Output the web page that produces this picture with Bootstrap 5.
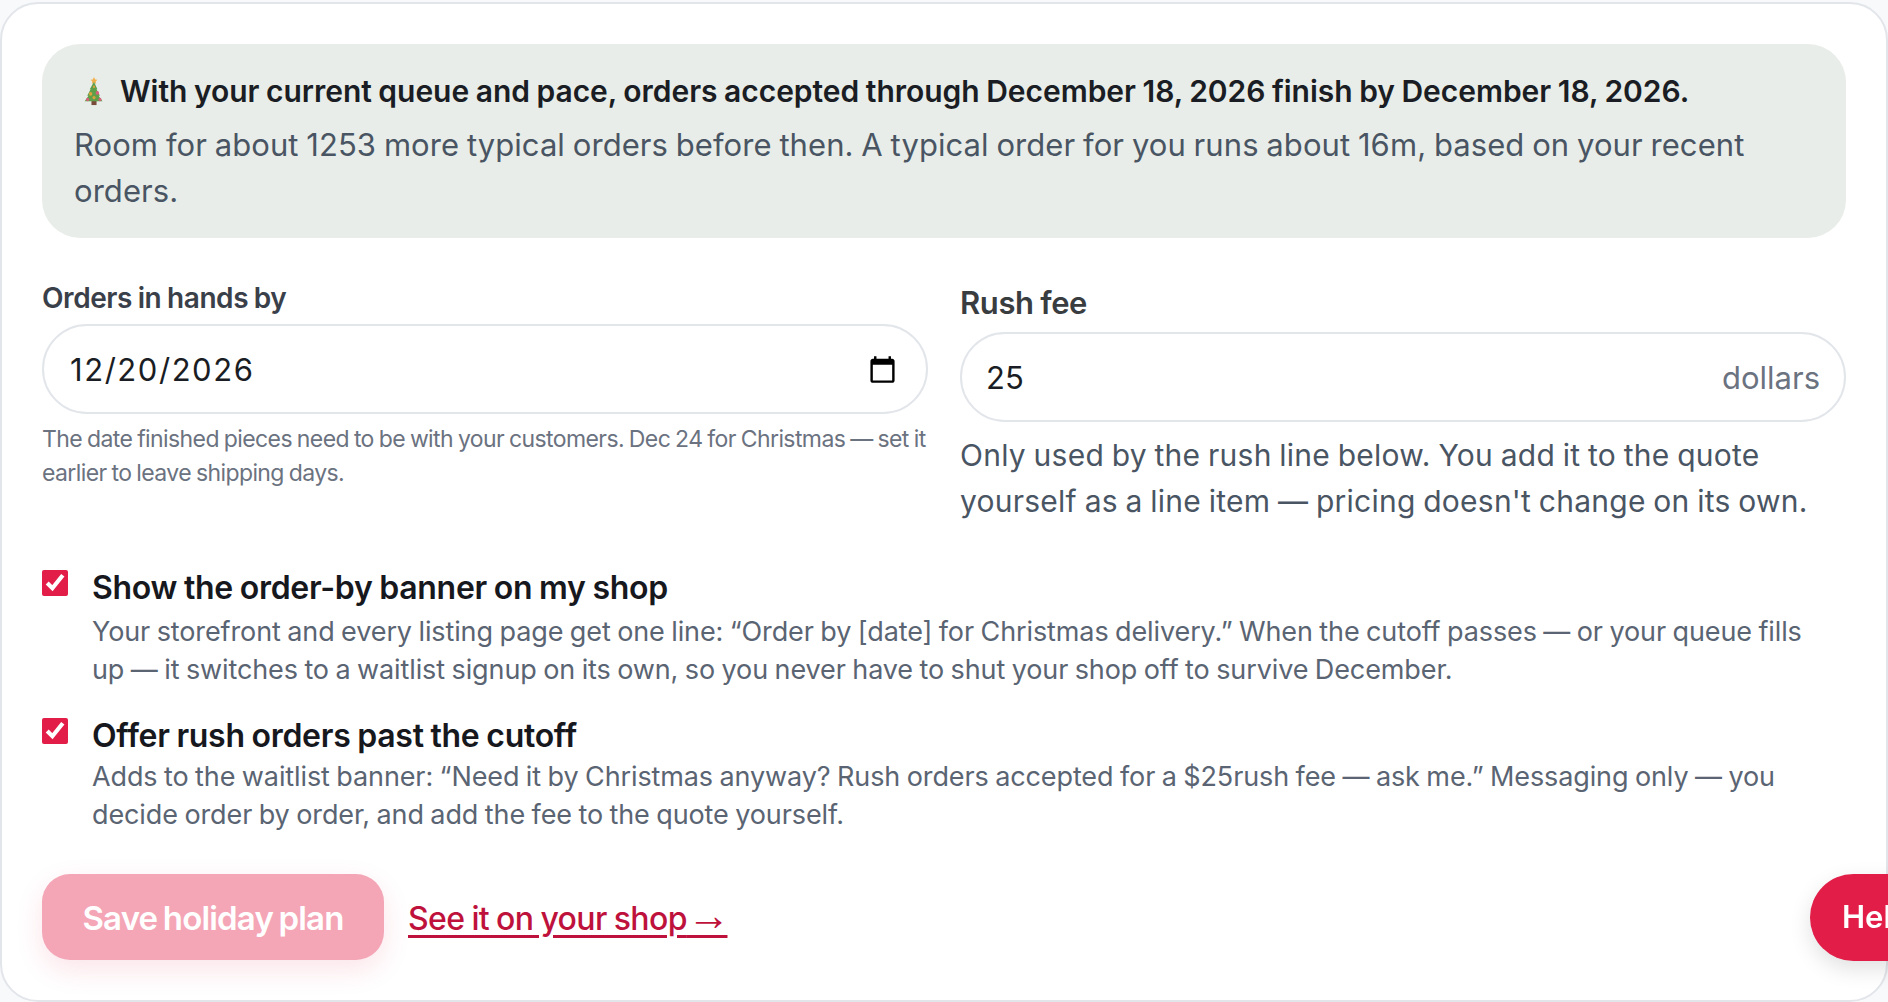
<!DOCTYPE html>
<html lang="en">
<head>
<meta charset="utf-8">
<title>Holiday plan</title>
<link rel="stylesheet" href="https://cdn.jsdelivr.net/npm/bootstrap@5.3.0/dist/css/bootstrap.min.css">
<style>
html,body{height:100%;overflow:hidden;background:#f8f9fa}
body{font-family:Inter,"Liberation Sans",sans-serif;color:#1a1d23;word-spacing:-.06em}
.plan-card{height:1000px;margin:2px 0 0 0;border:2px solid #e2e5ea;border-radius:38px;background:#fff;padding:40px 40px 0}
.plan-note{background:#e9ede9;border-radius:38px;padding:24px 32px 24px;height:194px}
.plan-note-head{font-size:30px;font-weight:600;line-height:46px;color:#1a1d23;display:flex;align-items:center;letter-spacing:-.001em}
.plan-note-body{font-size:31px;line-height:46px;color:#4a5563;margin-top:8px;letter-spacing:.002em}
.tree-ico{width:22px;height:30px;margin:0 15px 0 9px;flex:none}
.plan-fields{margin-top:42px;column-gap:32px}
.lbl-a{font-size:28px;font-weight:600;line-height:34px;color:#3a4049;margin:1px 0 9px;display:block;letter-spacing:-.015em}
.lbl-b{font-size:31px;font-weight:600;line-height:46px;color:#3a3d3f;margin-bottom:6px;display:block;letter-spacing:-.012em}
.plan-input{height:90px;border:2px solid #e2e5ea;border-radius:45px;padding:2px 26px 0;font-size:31px;color:#1a1d23;letter-spacing:.05em;box-shadow:none}
.plan-money{height:90px;border:2px solid #e2e5ea;border-radius:45px;padding:3px 24px 0}
.plan-money input{border:0;outline:0;flex:1;min-width:0;font:inherit;font-size:31px;color:#1a1d23;background:none;padding:0}
.plan-unit{font-size:31px;color:#6b7280}
.hint-a{font-size:23px;line-height:34px;color:#6b7280;margin-top:8px;letter-spacing:-.026em}
.hint-b{font-size:30px;line-height:46px;color:#4a5563;margin-top:10px;letter-spacing:.008em}
.opt-row{gap:24px}
.opt-row input{appearance:auto;width:26px;height:26px;margin:3px 0 0;flex:none;accent-color:#e11d48;border:0;background:none;box-shadow:none;border-radius:4px}
.opt-one{margin-top:43px}
.opt-two{margin-top:27px}
.opt-title{font-size:32px;font-weight:600;line-height:42px;color:#16181d;letter-spacing:-.009em}
.opt-desc{font-size:27px;line-height:37.5px;color:#5a6472;margin-top:4px;letter-spacing:-.004em;padding-right:16px}
.opt-two .opt-desc{margin-top:1px}
.plan-actions{margin-top:40.500px;gap:24px}
.save-btn{width:342px;height:86px;border:0;border-radius:28px;background:#f4a6b7;color:#fff;font-size:33px;font-weight:600;padding-top:11px;box-shadow:0 10px 28px rgba(225,29,72,.12);letter-spacing:-.025em;word-spacing:-.06em}
.shop-link{font-size:32px;font-weight:500;color:#be123c;text-underline-offset:5px;letter-spacing:-.019em;margin-top:4px}
.shop-link span{font-family:"Liberation Sans",sans-serif;font-size:1.35em;line-height:0;letter-spacing:-.06em}
.help-btn{position:fixed;left:1810px;top:874px;height:87px;width:180px;border:0;border-radius:44px;background:#e11d48;color:#fff;font-size:31px;font-weight:600;text-align:left;padding:0 32px;box-shadow:0 8px 22px rgba(0,0,0,.12)}
</style>
</head>
<body>
<div class="card plan-card">
  <div class="plan-note">
    <div class="plan-note-head">
      <svg class="tree-ico" viewBox="0 0 26 32" preserveAspectRatio="none" aria-hidden="true">
        <path d="M13 1l1.400 2.600 2.600.4-2 1.800.5 2.600L13 7l-2.500 1.400.5-2.600-2-1.800 2.600-.4z" fill="#f3b04a"/>
        <rect x="10" y="26" width="6" height="5" fill="#7a4a3a"/>
        <path d="M13 6l4 8h-1l4 7h-1.500l4.500 6H2l4.500-6H5l4-7H8z" fill="#5f9f49"/>
        <circle cx="9" cy="19" r="2" fill="#e0a13b"/><circle cx="17" cy="18" r="2" fill="#d9607a"/><circle cx="5.500" cy="25" r="1.800" fill="#d9607a"/><circle cx="20" cy="25" r="1.800" fill="#d9607a"/><circle cx="13" cy="11.500" r="1.300" fill="#e0a13b"/><circle cx="13" cy="23" r="1.800" fill="#e0a13b"/>
      </svg>
      <span>With your current queue and pace, orders accepted through December 18, 2026 finish by December 18, 2026.</span>
    </div>
    <div class="plan-note-body">Room for about 1253 more typical orders before then. A typical order for you runs about 16m, based on your recent orders.</div>
  </div>
  <div class="row g-0 plan-fields">
    <div class="col">
      <label class="lbl-a" for="d1">Orders in hands by</label>
      <input id="d1" type="date" class="form-control plan-input" value="2026-12-20">
      <div class="hint-a">The date finished pieces need to be with your customers. Dec 24 for Christmas — set it earlier to leave shipping days.</div>
    </div>
    <div class="col">
      <label class="lbl-b" for="f1">Rush fee</label>
      <div class="plan-money d-flex align-items-center">
        <input id="f1" type="text" value="25">
        <span class="plan-unit">dollars</span>
      </div>
      <div class="hint-b">Only used by the rush line below. You add it to the quote yourself as a line item — pricing doesn't change on its own.</div>
    </div>
  </div>
  <div class="d-flex opt-row opt-one">
    <input type="checkbox" checked aria-label="Show the order-by banner on my shop">
    <div>
      <div class="opt-title">Show the order-by banner on my shop</div>
      <div class="opt-desc">Your storefront and every listing page get one line: “Order by [date] for Christmas delivery.” When the cutoff passes — or your queue fills up — it switches to a waitlist signup on its own, so you never have to shut your shop off to survive December.</div>
    </div>
  </div>
  <div class="d-flex opt-row opt-two">
    <input type="checkbox" checked aria-label="Offer rush orders past the cutoff">
    <div>
      <div class="opt-title">Offer rush orders past the cutoff</div>
      <div class="opt-desc">Adds to the waitlist banner: “Need it by Christmas anyway? Rush orders accepted for a $25rush fee — ask me.” Messaging only — you decide order by order, and add the fee to the quote yourself.</div>
    </div>
  </div>
  <div class="d-flex align-items-center plan-actions">
    <button type="button" class="btn save-btn">Save holiday plan</button>
    <a href="#" class="shop-link">See it on your shop<span>→</span></a>
  </div>
</div>
<button type="button" class="btn help-btn">Help</button>
<script src="https://cdn.jsdelivr.net/npm/bootstrap@5.3.0/dist/js/bootstrap.bundle.min.js"></script>
</body>
</html>
